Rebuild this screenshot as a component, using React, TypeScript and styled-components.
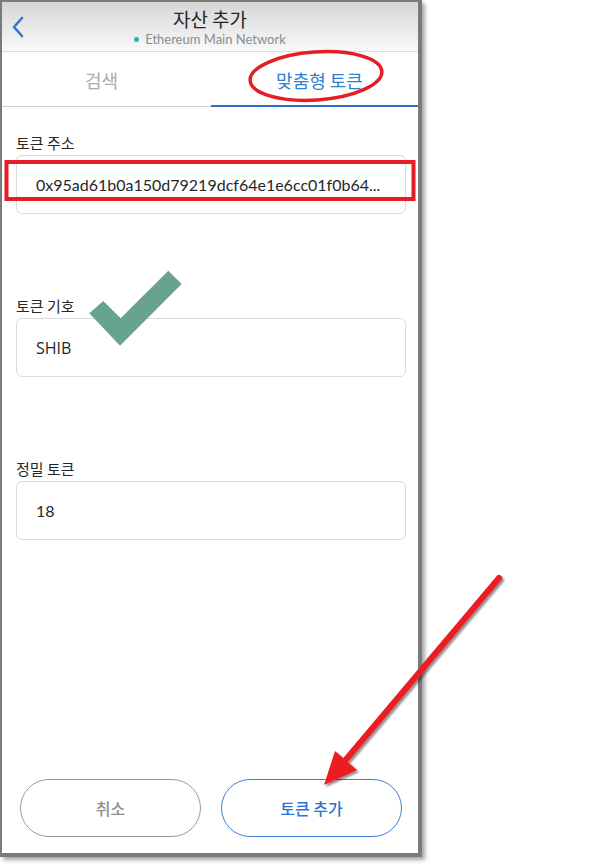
import React from "react";
import styled, { createGlobalStyle } from "styled-components";

const Global = createGlobalStyle`
  html, body { margin: 0; padding: 0; background: #ffffff; }
  body { width: 602px; height: 864px; overflow: hidden; position: relative;
    font-family: "Lato", "Noto Sans CJK KR", sans-serif; }
`;

const Stage = styled.div`
  position: relative;
  width: 602px;
  height: 864px;
`;

const Phone = styled.div`
  width: 416px;
  height: 851px;
  border-style: solid;
  border-color: #7a7a7a;
  border-width: 2px 4px 4px 2px;
  box-shadow: 3px 3px 4px rgba(0, 0, 0, 0.35);
  background: #ffffff;
  display: flex;
  flex-direction: column;
`;

const Header = styled.div`
  height: 49px;
  border-bottom: 1px solid #dcdcdc;
  background: linear-gradient(#d6d6d6, #f9f9f9);
  display: grid;
  grid-template-columns: 40px 1fr 40px;
  align-items: center;
`;

const Back = styled.div`
  display: flex;
  align-items: center;
  padding-left: 9px;
`;

const TitleBlock = styled.div`
  display: flex;
  flex-direction: column;
  align-items: center;
  padding-top: 1px;
`;

const Title = styled.div`
  font-family: "Noto Sans CJK KR", sans-serif;
  font-size: 19px;
  line-height: 23px;
  color: #24272a;
`;

const Network = styled.div`
  display: flex;
  align-items: center;
  gap: 6px;
  font-size: 13px;
  line-height: 16px;
  color: #8a8d91;
  margin-top: 1px;
`;

const Dot = styled.span`
  width: 5px;
  height: 5px;
  border-radius: 50%;
  background: #29b6af;
`;

const Tabs = styled.div`
  display: grid;
  grid-template-columns: 209px 1fr;
  height: 55px;
`;

const Tab = styled.div<{ $active?: boolean }>`
  display: flex;
  align-items: center;
  justify-content: center;
  padding-top: 2px;
  font-family: "Noto Sans CJK KR", sans-serif;
  font-size: 18px;
  color: ${(p) => (p.$active ? "#2f7fd0" : "#a9abae")};
  border-bottom: ${(p) => (p.$active ? "2px solid #2f6fca" : "1px solid #cfcfcf")};
  box-sizing: border-box;
  ${(p) =>
    p.$active
      ? "padding-left: 10px;"
      : "padding-bottom: 1px; padding-right: 10px;"}
`;

const Form = styled.div`
  display: flex;
  flex-direction: column;
  gap: 82px;
  padding: 26px 12px 0 14px;
`;

const Field = styled.div`
  display: flex;
  flex-direction: column;
`;

const Label = styled.div`
  font-family: "Noto Sans CJK KR", sans-serif;
  font-size: 15px;
  line-height: 20px;
  color: #24272a;
  margin-bottom: 2px;
`;

const Input = styled.div<{ $font?: string }>`
  height: 57px;
  border: 1px solid #d9dbde;
  border-radius: 6px;
  display: flex;
  align-items: center;
  padding-left: 19px;
  font-family: ${(p) => p.$font || '"Lato", sans-serif'};
  font-size: 16px;
  color: #24272a;
  white-space: nowrap;
  overflow: hidden;
`;

const Footer = styled.div`
  margin-top: auto;
  display: grid;
  grid-template-columns: 181px 181px;
  gap: 20px;
  padding: 0 17px 16px 18px;
`;

const Button = styled.div<{ $primary?: boolean }>`
  height: 56px;
  border-radius: 29px;
  border: 1px solid ${(p) => (p.$primary ? "#3b82d6" : "#9a9c9f")};
  display: flex;
  align-items: center;
  justify-content: center;
  font-family: "Noto Sans CJK KR", sans-serif;
  font-size: 16px;
  font-weight: 500;
  color: ${(p) => (p.$primary ? "#2a74d0" : "#8d8f92")};
`;

const Overlay = styled.svg`
  position: absolute;
  left: 0;
  top: 0;
  pointer-events: none;
`;

export default function App() {
  return (
    <Stage>
      <Global />
      <Phone>
        <Header>
          <Back>
            <svg width="14" height="22" viewBox="0 0 14 22">
              <path d="M11 2 L3 11 L11 20" fill="none" stroke="#2f78cc" strokeWidth="2.6" strokeLinecap="round" strokeLinejoin="round" />
            </svg>
          </Back>
          <TitleBlock>
            <Title>자산 추가</Title>
            <Network>
              <Dot />
              Ethereum Main Network
            </Network>
          </TitleBlock>
          <div />
        </Header>
        <Tabs>
          <Tab>검색</Tab>
          <Tab $active>맞춤형 토큰</Tab>
        </Tabs>
        <Form>
          <Field>
            <Label>토큰 주소</Label>
            <Input>0x95ad61b0a150d79219dcf64e1e6cc01f0b64...</Input>
          </Field>
          <Field>
            <Label>토큰 기호</Label>
            <Input $font='"Open Sans", sans-serif'>SHIB</Input>
          </Field>
          <Field>
            <Label>정밀 토큰</Label>
            <Input>18</Input>
          </Field>
        </Form>
        <Footer>
          <Button>취소</Button>
          <Button $primary>토큰 추가</Button>
        </Footer>
      </Phone>
      <Overlay width="602" height="864" viewBox="0 0 602 864">
        <defs>
          <filter id="sh" x="-20%" y="-20%" width="140%" height="140%">
            <feDropShadow dx="2" dy="2" stdDeviation="1.2" floodColor="#000" floodOpacity="0.45" />
          </filter>
        </defs>
        <ellipse cx="316" cy="76" rx="66" ry="24" fill="none" stroke="#e51d26" strokeWidth="3.5" transform="rotate(-4 316 76)" />
        <rect x="6.5" y="162" width="407" height="37" fill="none" stroke="#e51d26" strokeWidth="4" />
        <polygon points="89.3,313.3 103.3,301 120.7,318.3 168.3,270.7 181.7,284 120,345.7" fill="#68a48d" />
        <g filter="url(#sh)">
          <line x1="499" y1="578" x2="343" y2="763" stroke="#ec1c24" strokeWidth="6" strokeLinecap="round" />
          <polygon points="324,785 335,751 357,770" fill="#ec1c24" />
        </g>
      </Overlay>
    </Stage>
  );
}
